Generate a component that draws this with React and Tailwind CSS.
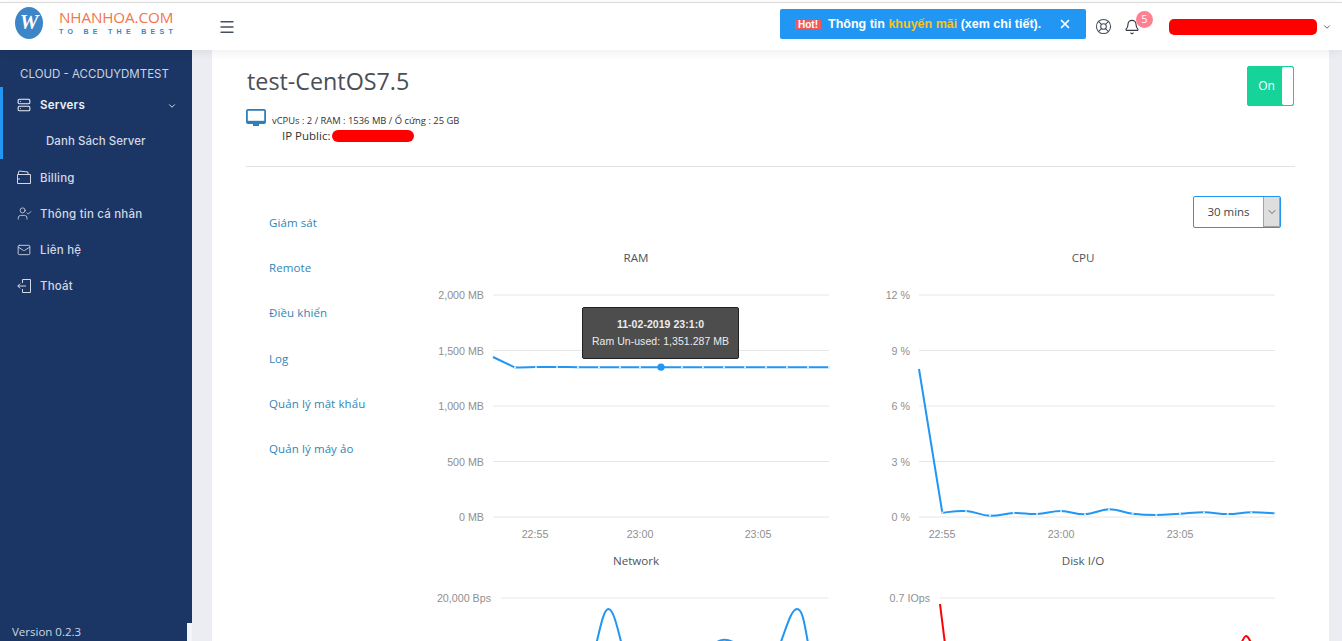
import { Bell, ChevronDown, LifeBuoy, Menu, Server, UserCheck, Mail, X } from "lucide-react";

const sans = "font-['Open_Sans','Noto_Sans',sans-serif]";
const arial = "font-['Liberation_Sans',Arial,sans-serif]";

function smooth(points, t = 0.2) {
  let d = `M${points[0][0]},${points[0][1]}`;
  for (let i = 0; i < points.length - 1; i++) {
    const p0 = points[i - 1] || points[i];
    const p1 = points[i];
    const p2 = points[i + 1];
    const p3 = points[i + 2] || p2;
    const c1x = p1[0] + (p2[0] - p0[0]) * t;
    const c1y = p1[1] + (p2[1] - p0[1]) * t;
    const c2x = p2[0] - (p3[0] - p1[0]) * t;
    const c2y = p2[1] - (p3[1] - p1[1]) * t;
    d += ` C${c1x},${c1y} ${c2x},${c2y} ${p2[0]},${p2[1]}`;
  }
  return d;
}

const ramPoints = [[515, 367.6], [536, 367], [557, 367], [578, 367.2], [599, 367.2], [620, 367.2], [640, 367.2], [661, 367.2], [682, 367.2], [703, 367.2], [724, 367.2], [745, 367.2], [766, 367.2], [787, 367.2], [808, 367.2], [829, 367.2]];
const cpuPoints = [[942.3, 512.7], [966, 511], [990, 515.7], [1013.7, 513], [1037, 514], [1061, 511], [1085, 514.3], [1109, 509.3], [1132.7, 513.7], [1156.3, 515], [1180, 513.7], [1204, 512.3], [1227.7, 514], [1251.3, 512.3], [1275, 513.3]];

function Grid({ lines, x1, x2, labelX }) {
  return lines.map(([y, label]) => (
    <g key={label}>
      <line x1={x1} x2={x2} y1={y} y2={y} stroke="#e6e6e6" strokeWidth="1" />
      <text x={labelX} y={y + 4} textAnchor="end" fontSize="10.7" fill="#8f8f8f">{label}</text>
    </g>
  ));
}

function XLabels({ items }) {
  return items.map(([x, label]) => (
    <text key={label} x={x} y={538} textAnchor="middle" fontSize="10.7" fill="#8f8f8f">{label}</text>
  ));
}

function Dots({ points }) {
  return points.map(([x, y]) => <circle key={x} cx={x} cy={y} r="1.1" fill="#d7eefe" />);
}

function Chart({ title, titleClass, viewBox, children, tooltip }) {
  return (
    <div className="relative h-[303px]">
      <h3 className={`h-4 text-center text-[11.6px] leading-4 text-[#4c5560] ${titleClass}`}>{title}</h3>
      <svg className={`block h-[287px] w-[410px] ${arial}`} viewBox={viewBox}>{children}</svg>
      {tooltip}
    </div>
  );
}

function NavItem({ icon, label }) {
  return (
    <a className="flex h-[36.3px] items-center pl-[17px] pt-[2px]">
      <span className="-mt-[2px] flex w-[23px] shrink-0">{icon}</span>
      <span className="text-[11.5px] font-medium tracking-[0.2px] text-[#d3d9e4]">{label}</span>
    </a>
  );
}

function WalletIcon() {
  return (
    <svg width="14" height="14" viewBox="0 0 14 14" fill="none" stroke="#d3d9e4" strokeWidth="1">
      <path d="M0.5 4.5h13v9h-13z" />
      <path d="M1 4.5l1-3.5 9 1v2.5" />
      <path d="M0.5 9h2.5" />
    </svg>
  );
}

function ExitIcon() {
  return (
    <svg width="14" height="14" viewBox="0 0 14 14" fill="none" stroke="#d3d9e4" strokeWidth="1">
      <path d="M5.5 4V0.5h8v13h-8V10" />
      <path d="M9 7H0.8M3.2 4.6L0.8 7l2.4 2.4" />
    </svg>
  );
}

function MonitorIcon() {
  return (
    <svg width="20" height="18" viewBox="0 0 20 18">
      <path d="M2 0h16a2 2 0 0 1 2 2v11a2 2 0 0 1-2 2H2a2 2 0 0 1-2-2V2a2 2 0 0 1 2-2z" fill="#2f7fb8" />
      <rect x="1.8" y="1.8" width="16.4" height="10" fill="#fff" />
      <rect x="7" y="15" width="6" height="2" fill="#2f7fb8" />
    </svg>
  );
}

const tabs = ["Giám sát", "Remote", "Điều khiển", "Log", "Quản lý mật khẩu", "Quản lý máy ảo"];

export default function App() {
  return (
    <div className={`flex h-screen flex-col overflow-hidden bg-white ${sans}`}>
      <div className="h-[3px] shrink-0 border-b border-[#dedede] bg-white" />
      <header className="relative z-10 flex h-[47px] shrink-0 items-center bg-white shadow-[0_2px_10px_rgba(0,0,0,0.07)]">
        <div className="-mt-[8px] flex w-[218px] items-center pl-[15px]">
          <div className="flex h-8 w-[28px] items-center justify-center rounded-[50%] bg-[#3c86c8] font-['Liberation_Serif',serif] text-[21px] font-bold italic text-white">W</div>
          <div className="ml-[16px] flex flex-col">
            <span className="text-[15.2px] leading-[15px] tracking-[-0.1px] text-[#f2764a]">NHANHOA.COM</span>
            <span className={`mt-[3px] text-[7px] font-bold leading-[8px] tracking-[4.3px] whitespace-nowrap text-[#3c86c8] ${arial}`}>TO BE THE BEST</span>
          </div>
        </div>
        <Menu size={18} strokeWidth={1.8} className="text-[#46505e]" />
        <div className="ml-auto -mt-[5px] flex h-[30px] w-[306px] items-center rounded-[2px] bg-[#2196f3] pl-[15px]">
          <span className={`flex h-[9px] w-[26px] items-center justify-center bg-[#f05a5a] text-[10px] font-bold text-white ${arial}`}>Hot!</span>
          <span className={`ml-[7px] text-[12.5px] font-bold whitespace-nowrap text-white ${arial}`}>
            Thông tin <span className="text-[#f7c325]">khuyến mãi</span> (xem chi tiết).
          </span>
          <X size={14} strokeWidth={3} className="ml-[17px] text-white" />
        </div>
        <LifeBuoy size={17} strokeWidth={1.5} className="ml-[9px] text-[#46505e]" />
        <div className="relative ml-[12px] flex">
          <Bell size={16} strokeWidth={1.7} className="text-[#333a45]" />
          <span className="absolute -top-[8px] left-[12px] flex h-[17px] w-[17px] items-center justify-center rounded-full bg-[#ff8091] text-[11px] text-white">5</span>
        </div>
        <div className="ml-[29px] h-4 w-[148px] rounded-[5px] bg-[#ff0000]" />
        <ChevronDown size={10} className="ml-[5px] text-[#46505e]" />
        <div className="w-[10px]" />
      </header>

      <div className="relative flex min-h-0 flex-1">
        <aside className="flex w-[192px] shrink-0 flex-col bg-[#1b3664] font-['Inter',sans-serif]">
          <p className="pr-[3px] pt-[16px] text-center text-[11.5px] leading-4 text-[#ccd3e0]">CLOUD - ACCDUYDMTEST</p>
          <nav className="mt-[5px]">
            <div className="border-l-[3px] border-[#2196f3]">
              <a className="flex h-9 items-center pl-[14px] pr-[15px] pt-[2px]">
                <span className="-mt-[2px] flex w-[23px]"><Server size={14} strokeWidth={1.8} className="text-[#eef1f6]" /></span>
                <span className="text-[11.5px] font-semibold tracking-[0.25px] text-[#eef1f6]">Servers</span>
                <ChevronDown size={10} strokeWidth={2.4} className="ml-auto text-[#d3d9e4]" />
              </a>
              <a className="flex h-9 items-center pl-[43px] pt-[2px] text-[11.5px] font-medium tracking-[0.05px] text-[#d3d9e4]">Danh Sách Server</a>
            </div>
            <NavItem icon={<WalletIcon />} label="Billing" />
            <NavItem icon={<UserCheck size={15} strokeWidth={1.3} className="text-[#d3d9e4]" />} label="Thông tin cá nhân" />
            <NavItem icon={<Mail size={14} strokeWidth={1.5} className="text-[#d3d9e4]" />} label="Liên hệ" />
            <NavItem icon={<ExitIcon />} label="Thoát" />
          </nav>
          <p className={`mt-auto pb-[2px] pl-[12px] text-[11.5px] leading-[14px] text-[#cfd6e2] ${sans}`}>Version 0.2.3</p>
        </aside>
        <div className="absolute bottom-0 left-[187px] h-[18px] w-[5px] bg-[#f4f5f8]" />

        <main className="flex min-w-0 flex-1 bg-[#ecedf2] pl-[20px] pr-[13px]">
          <section className="flex-1 bg-white pl-[34px] pr-[34px] pt-[16px]">
            <div className="flex h-[101px] justify-between border-b border-[#e3e3e3]">
              <div>
                <h1 className="ml-[1px] text-[23.3px] leading-[30px] text-[#4a4f55]">test-CentOS7.5</h1>
                <div className="mt-[13px] flex">
                  <MonitorIcon />
                  <div className="ml-[6px] pt-[5px]">
                    <p className="text-[9.4px] leading-[14px] text-[#333]">vCPUs : 2 / RAM : 1536 MB / Ổ cứng : 25 GB</p>
                    <p className="ml-[10px] flex items-center text-[11.5px] leading-[16px] text-[#333]">
                      IP Public:
                      <span className="ml-[2px] inline-block h-3 w-[82px] rounded-[6px] bg-[#ff0000]" />
                    </p>
                  </div>
                </div>
              </div>
              <button className="mr-[1px] flex h-10 w-[47px] items-center rounded-[2px] border border-[#16d39a] bg-[#16d39a] pl-[3px] text-[12px] text-white">
                <span className="flex-1 text-center">On</span>
                <span className="h-full w-[11px] rounded-[2px] bg-white" />
              </button>
            </div>

            <div className="flex">
              <nav className="flex w-[184px] shrink-0 flex-col pl-[23px] pt-[47px]">
                {tabs.map((tab) => (
                  <a key={tab} className="h-[45.2px] text-[11.5px] leading-[17px] tracking-[0.1px] text-[#2f86b8]">{tab}</a>
                ))}
              </nav>
              <div className="min-w-0 flex-1">
                <div className="mr-[14px] mt-[29px] flex justify-end">
                  <div className="flex h-8 w-[88px] overflow-hidden rounded-[2px] border border-[#2196f3]">
                    <span className="flex flex-1 items-center justify-center text-[11.5px] text-[#444]">30 mins</span>
                    <span className="flex w-[17px] items-center justify-center border-x border-b border-[#a3a3a3] bg-[#dedede]">
                      <ChevronDown size={12} strokeWidth={1.5} className="text-[#444]" />
                    </span>
                  </div>
                </div>
                <div className="mt-[22px] grid grid-cols-[410px_410px] gap-x-[40px]">
                  <Chart
                    title="RAM"
                    titleClass="pl-[2px]"
                    viewBox="430 266 410 287"
                    tooltip={
                      <div className={`absolute left-[152px] top-[57px] flex h-[52px] w-[157px] flex-col items-center justify-center rounded-[2px] border border-[#222] bg-[#4d4d4d] text-[10.5px] leading-[17px] tracking-[0.05px] text-[#ececec] ${arial}`}>
                        <b>11-02-2019 23:1:0</b>
                        <span>Ram Un-used: 1,351.287 MB</span>
                      </div>
                    }
                  >
                    <Grid x1={493} x2={829} labelX={484} lines={[[295, "2,000 MB"], [350.5, "1,500 MB"], [406, "1,000 MB"], [461.5, "500 MB"], [517, "0 MB"]]} />
                    <XLabels items={[[535, "22:55"], [640, "23:00"], [758, "23:05"]]} />
                    <path d={`M493,357 L515,367.6 ${smooth(ramPoints).replace(/^M[^ ]+/, "")}`} fill="none" stroke="#2196f3" strokeWidth="2" />
                    <Dots points={ramPoints} />
                    <circle cx="661" cy="367.2" r="3.6" fill="#2196f3" />
                  </Chart>
                  <Chart title="CPU" titleClass="pr-[4px]" viewBox="880 266 410 287">
                    <Grid x1={919} x2={1275} labelX={910} lines={[[295, "12 %"], [350.5, "9 %"], [406, "6 %"], [461.5, "3 %"], [517, "0 %"]]} />
                    <XLabels items={[[942, "22:55"], [1061, "23:00"], [1180, "23:05"]]} />
                    <path d={`M919,369 L942.3,512.7 ${smooth(cpuPoints).replace(/^M[^ ]+/, "")}`} fill="none" stroke="#2196f3" strokeWidth="2" />
                    <Dots points={cpuPoints} />
                  </Chart>
                  <Chart title="Network" titleClass="pl-[2px]" viewBox="430 569 410 287">
                    <Grid x1={501} x2={828} labelX={491} lines={[[598, "20,000 Bps"]]} />
                    <path d="M590,670 C600,630 603,609 608.5,609 C614,609 618,630 628,670" fill="none" stroke="#2196f3" strokeWidth="2" />
                    <path d="M708,652 C716,639 724,637 735,643" fill="none" stroke="#2196f3" strokeWidth="2" />
                    <path d="M770,670 C785,635 790,609 797,609 C804,609 805,630 813,670" fill="none" stroke="#2196f3" strokeWidth="2" />
                  </Chart>
                  <Chart title="Disk I/O" titleClass="pr-[4px]" viewBox="880 569 410 287">
                    <Grid x1={940} x2={1275} labelX={930} lines={[[598, "0.7 IOps"]]} />
                    <path d="M940,604 L947,660" fill="none" stroke="#ff0000" strokeWidth="2" />
                    <path d="M1238,650 C1243,640 1244,636 1246,636 C1248,636 1250,640 1254,650" fill="none" stroke="#ff0000" strokeWidth="2" />
                  </Chart>
                </div>
              </div>
            </div>
          </section>
        </main>
      </div>
    </div>
  );
}
